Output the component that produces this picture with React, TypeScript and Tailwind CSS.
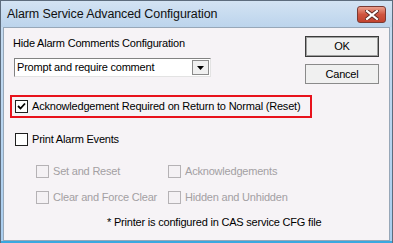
import React from "react";

const font = { fontFamily: '"Liberation Sans", Arial, sans-serif' };

function Check({ checked, disabled }: { checked?: boolean; disabled?: boolean }) {
  return (
    <div
      className={
        "w-[13px] h-[13px] shrink-0 border flex items-center justify-center " +
        (disabled ? "border-[#b5b2b5] bg-[#f4f1f4]" : "border-[#1f1f1f] bg-white")
      }
    >
      {checked && (
        <svg width="9" height="9" viewBox="0 0 9 9">
          <path d="M1 4 L3.5 6.5 L8 1.5" fill="none" stroke="#000" strokeWidth="1.8" />
        </svg>
      )}
    </div>
  );
}

export default function App() {
  return (
    <div
      className="w-[393px] h-[243px] flex flex-col bg-gradient-to-b from-[#c8dcf0] to-[#a9cdef] border-l border-t border-r border-[#5d6c7d] overflow-hidden"
      style={font}
    >
      {/* Title bar */}
      <div className="h-[26px] shrink-0 flex items-center pl-[6px] pr-[6px] bg-gradient-to-b from-[#d3e3f3] to-[#bcd4ec]">
        <span className="text-[12.5px] text-[#111] whitespace-nowrap tracking-[-0.1px]">Alarm Service Advanced Configuration</span>
        <div className="ml-auto mt-[1px] w-[29px] h-[17px] rounded-[3px] border border-[#7a3a33] bg-gradient-to-b from-[#eaa08e] via-[#cf5540] to-[#c2432f] flex items-center justify-center">
          <svg width="14" height="10" viewBox="0 0 14 10">
            <path d="M2 1 L12 9 M12 1 L2 9" stroke="#5a2a24" strokeWidth="4" strokeLinecap="square" />
            <path d="M2 1 L12 9 M12 1 L2 9" stroke="#fff" strokeWidth="2.2" strokeLinecap="square" />
          </svg>
        </div>
      </div>
      {/* Client */}
      <div className="flex-1 mx-[2px] mb-[3px] bg-[#f6f3f6] border border-[#97a7b8] text-[11px] tracking-[-0.2px] text-black whitespace-nowrap">
        <div className="flex">
          <div className="pl-[9px] pt-[9px]">
            <div className="leading-[13px]">Hide Alarm Comments Configuration</div>
            <div className="mt-[8px] ml-[1px] w-[197px] h-[19px] bg-white border border-t-[#828282] border-l-[#828282] border-r-[#e3e3e3] border-b-[#e3e3e3] flex items-center">
              <span className="pl-[2px] leading-[13px]">Prompt and require comment</span>
              <div className="ml-auto mr-[1px] w-[17px] h-[15px] border border-[#8b8b8b] bg-[#f0f0f0] flex items-center justify-center">
                <svg width="7" height="4" viewBox="0 0 7 4">
                  <path d="M0 0 H7 L3.5 4 Z" fill="#000" />
                </svg>
              </div>
            </div>
          </div>
          <div className="ml-auto mr-[10px] pt-[8px] flex flex-col gap-[7px]">
            <div className="w-[74px] h-[21px] border border-[#3c3c3c] bg-[#f0f0f0] flex items-center justify-center">
              <div className="w-[72px] h-[19px] border border-[#a0a0a0] flex items-center justify-center">OK</div>
            </div>
            <div className="w-[74px] h-[20px] border border-[#8a8a8a] bg-[#f0f0f0] flex items-center justify-center">
              Cancel
            </div>
          </div>
        </div>

        <div className="ml-[6px] mt-[11px] w-[302px] h-[23px] border-2 border-[#e8121c] flex items-center pl-[3px] gap-[4px]">
          <Check checked />
          <span className="leading-[13px]">Acknowledgement Required on Return to Normal (Reset)</span>
        </div>

        <div className="ml-[11px] mt-[15px] flex items-center gap-[4px]">
          <Check />
          <span className="leading-[13px]">Print Alarm Events</span>
        </div>

        <div className="ml-[32px] mt-[19px] grid grid-cols-[132px_auto] gap-y-[13px] text-[#a3a0a3]">
          <div className="flex items-center gap-[4px]">
            <Check disabled />
            <span className="leading-[13px]">Set and Reset</span>
          </div>
          <div className="flex items-center gap-[4px]">
            <Check disabled />
            <span className="leading-[13px]">Acknowledgements</span>
          </div>
          <div className="flex items-center gap-[4px]">
            <Check disabled />
            <span className="leading-[13px]">Clear and Force Clear</span>
          </div>
          <div className="flex items-center gap-[4px]">
            <Check disabled />
            <span className="leading-[13px]">Hidden and Unhidden</span>
          </div>
        </div>

        <div className="ml-[103px] mt-[12px] leading-[13px]">* Printer is configured in CAS service CFG file</div>
      </div>
      <div className="h-[2px] shrink-0 bg-[#3aa8e0] -mt-[3px]" />
    </div>
  );
}
